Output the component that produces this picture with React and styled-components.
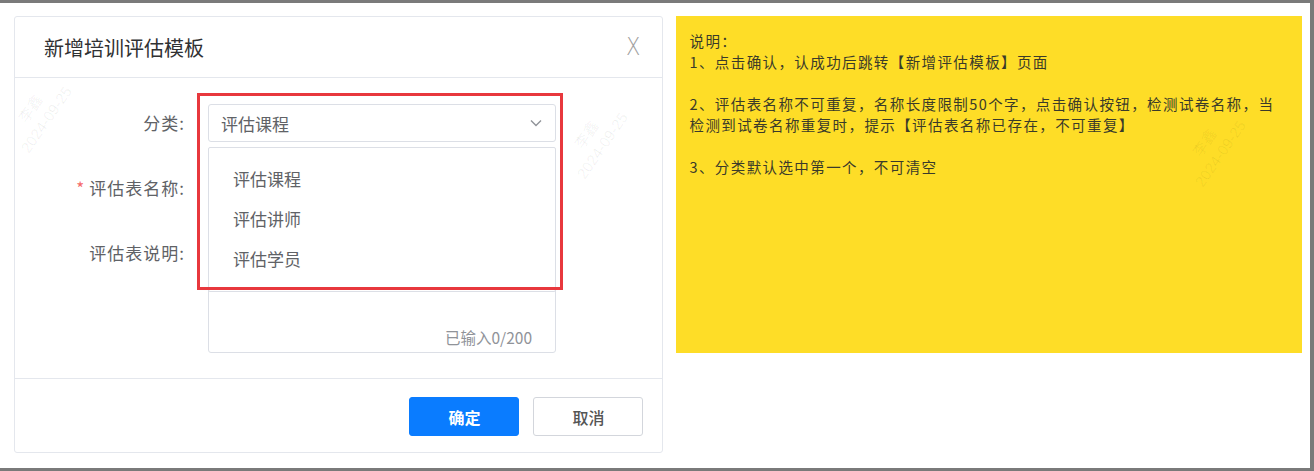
import styled, { createGlobalStyle } from 'styled-components';

const GlobalStyle = createGlobalStyle`
  html, body {
    margin: 0;
    padding: 0;
    background: #ffffff;
  }
  body {
    font-family: "Noto Sans CJK SC", "Noto Sans", sans-serif;
  }
`;

const notes = [
  '说明：',
  '1、点击确认，认成功后跳转【新增评估模板】页面',
  '',
  '2、评估表名称不可重复，名称长度限制50个字，点击确认按钮，检测试卷名称，当检测到试卷名称重复时，提示【评估表名称已存在，不可重复】',
  '',
  '3、分类默认选中第一个，不可清空',
];

const options = ['评估课程', '评估讲师', '评估学员'];

const marks = [
  { x: 0, y: 92 },
  { x: 556, y: 118 },
  { x: 1174, y: 126 },
];

export default function App() {
  return (
    <>
      <GlobalStyle />
      <Frame>
        {marks.map((m, i) => (
          <Watermark key={i} style={{ left: m.x, top: m.y }}>
            <span>李鑫</span>
            <span>2024-09-25</span>
          </Watermark>
        ))}
        <Card>
          <Header>
            <Title>新增培训评估模板</Title>
            <Close>X</Close>
          </Header>
          <Body>
            <Row>
              <Label>分类:</Label>
              <Select>
                <span>评估课程</span>
                <Chevron viewBox="0 0 16 16">
                  <path d="M3 5.5 L8 10.5 L13 5.5" />
                </Chevron>
              </Select>
            </Row>
            <Row>
              <Label><Star>*</Star>评估表名称:</Label>
              <Input />
            </Row>
            <Row>
              <Label>评估表说明:</Label>
              <TextArea>
                <Counter>已输入0/200</Counter>
              </TextArea>
            </Row>
            <Menu>
              {options.map((o) => (
                <MenuItem key={o}>{o}</MenuItem>
              ))}
            </Menu>
            <Highlight />
          </Body>
          <Footer>
            <Button $primary>确定</Button>
            <Button>取消</Button>
          </Footer>
        </Card>
        <Notes>
          {notes.map((line, i) => (
            <NoteLine key={i}>{line || '\u00a0'}</NoteLine>
          ))}
        </Notes>
      </Frame>
    </>
  );
}

const Frame = styled.div`
  position: relative;
  overflow: hidden;
  box-sizing: border-box;
  height: 471px;
  border-top: 3px solid #7a7a7a;
  border-right: 4px solid #7a7a7a;
  border-bottom: 3px solid #7a7a7a;
  padding: 13px 8px 0 14px;
  display: flex;
  align-items: flex-start;
  gap: 13px;
`;

const Watermark = styled.div`
  position: absolute;
  display: flex;
  flex-direction: column;
  align-items: center;
  transform: rotate(-55deg);
  color: rgba(0, 0, 0, 0.06);
  font-family: "Liberation Sans", "Noto Sans CJK SC", sans-serif;
  font-size: 15px;
  line-height: 19px;
  pointer-events: none;
  z-index: 5;
`;

const Card = styled.div`
  width: 650px;
  box-sizing: border-box;
  border: 1px solid #e4e7ed;
  border-radius: 3px;
  background: #fff;
`;

const Header = styled.div`
  height: 60px;
  border-bottom: 1px solid #e4e7ed;
  display: flex;
  align-items: center;
  justify-content: space-between;
  padding: 0 22px 0 29px;
`;

const Title = styled.div`
  font-size: 20px;
  color: #303133;
`;

const Close = styled.div`
  font-family: "DejaVu Sans", sans-serif;
  font-weight: 200;
  font-size: 21px;
  color: #a0a0a0;
  transform: scaleY(1.2);
`;

const Body = styled.div`
  position: relative;
  padding: 26px 0 25px;
  display: flex;
  flex-direction: column;
  gap: 27px;
  border-bottom: 1px solid #e4e7ed;
`;

const Row = styled.div`
  display: flex;
  align-items: flex-start;
  gap: 23px;
`;

const Label = styled.div`
  width: 170px;
  text-align: right;
  font-size: 17px;
  letter-spacing: 1px;
  line-height: 38px;
  color: #606266;
`;

const Star = styled.span`
  color: #f56c6c;
  margin-right: 4px;
`;

const Select = styled.div`
  width: 348px;
  height: 38px;
  box-sizing: border-box;
  border: 1px solid #dcdfe6;
  border-radius: 3px;
  display: flex;
  align-items: center;
  justify-content: space-between;
  padding: 0 11px 0 12px;
  font-size: 17px;
  color: #606266;
`;

const Chevron = styled.svg`
  width: 16px;
  height: 16px;
  fill: none;
  stroke: #909399;
  stroke-width: 1.4;
`;

const Input = styled.div`
  width: 348px;
  height: 38px;
  box-sizing: border-box;
  border: 1px solid #dcdfe6;
  border-radius: 3px;
`;

const TextArea = styled.div`
  width: 348px;
  height: 119px;
  box-sizing: border-box;
  border: 1px solid #dcdfe6;
  border-radius: 3px;
  display: flex;
  align-items: flex-end;
  justify-content: flex-end;
  padding: 0 23px 4px 0;
`;

const Counter = styled.span`
  font-size: 15.5px;
  color: #909399;
`;

const Menu = styled.div`
  position: absolute;
  left: 193px;
  top: 69px;
  width: 348px;
  box-sizing: border-box;
  padding: 11px 0 12px;
  background: #fff;
  border: 1px solid #dcdfe6;
  border-radius: 2px;
  z-index: 2;
`;

const MenuItem = styled.div`
  height: 40px;
  line-height: 40px;
  padding-left: 24px;
  font-size: 17px;
  color: #606266;
`;

const Highlight = styled.div`
  position: absolute;
  left: 182px;
  top: 15px;
  width: 366px;
  height: 197px;
  box-sizing: border-box;
  border: 3px solid #e8383d;
  z-index: 3;
`;

const Footer = styled.div`
  display: flex;
  justify-content: flex-end;
  gap: 14px;
  padding: 18px 19px 16px;
`;

const Button = styled.div`
  width: 110px;
  height: 39px;
  box-sizing: border-box;
  border-radius: 3px;
  display: flex;
  align-items: center;
  justify-content: center;
  font-size: 16px;
  font-weight: ${({ $primary }) => ($primary ? 700 : 500)};
  color: ${({ $primary }) => ($primary ? '#ffffff' : '#555555')};
  background: ${({ $primary }) => ($primary ? '#0a7cff' : '#ffffff')};
  border: 1px solid ${({ $primary }) => ($primary ? '#0a7cff' : '#d3d6dc')};
`;

const Notes = styled.div`
  width: 626px;
  height: 337px;
  box-sizing: border-box;
  background: #fedd27;
  padding: 14px 13px;
  font-size: 14.5px;
  letter-spacing: 1.4px;
  line-height: 21px;
  color: #3a3a2a;
`;

const NoteLine = styled.div``;
